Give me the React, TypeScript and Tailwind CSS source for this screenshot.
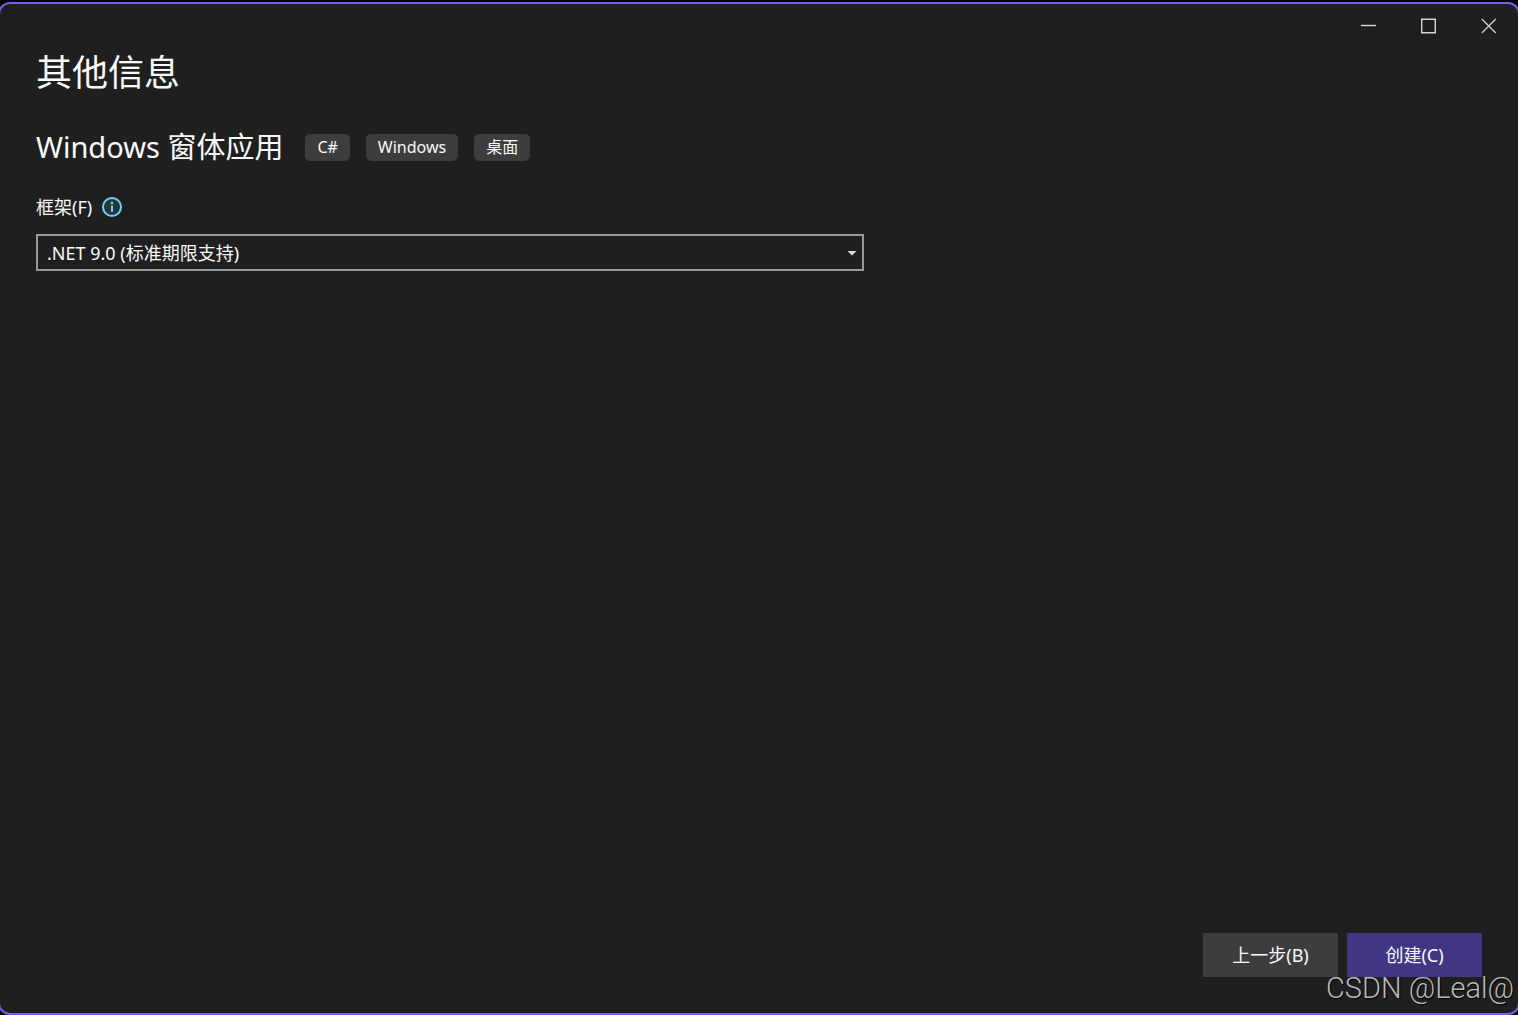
import { useState } from 'react';

const tags = ['C#', 'Windows', '桌面'];

const frameworks = [
  { value: 'net9.0', label: '.NET 9.0 (标准期限支持)' },
  { value: 'net8.0', label: '.NET 8.0 (长期支持)' },
];

function WindowControls() {
  return (
    <div className="flex justify-end text-[#d6d6d6]">
      <button type="button" aria-label="最小化" className="flex h-11 w-15 items-center justify-center">
        <svg className="h-4 w-4" viewBox="0 0 16 16" fill="none" stroke="currentColor" strokeWidth="1.4">
          <path d="M1 7.5h16" />
        </svg>
      </button>
      <button type="button" aria-label="最大化" className="flex h-11 w-15 items-center justify-center">
        <svg className="h-4 w-4" viewBox="0 0 16 16" fill="none" stroke="currentColor" strokeWidth="1.4">
          <path d="M1.7 1.2h13.6v13.6H1.7z" />
        </svg>
      </button>
      <button type="button" aria-label="关闭" className="flex h-11 w-15 items-center justify-center">
        <svg className="h-4 w-4" viewBox="0 0 16 16" fill="none" stroke="currentColor" strokeWidth="1.2">
          <path d="M1.8 1l14 14M15.8 1l-14 14" />
        </svg>
      </button>
    </div>
  );
}

function InfoIcon() {
  return (
    <svg className="h-5 w-5" viewBox="0 0 20 20" fill="none" aria-hidden="true">
      <circle cx="10" cy="10" r="9" fill="#26363c" stroke="#6dd3f5" strokeWidth="2" />
      <circle cx="10" cy="6" r="1.3" fill="#6dd3f5" />
      <path d="M10 8.5v6.5" stroke="#6dd3f5" strokeWidth="2" />
    </svg>
  );
}

export default function App() {
  const [framework, setFramework] = useState('net9.0');

  return (
    <div className="flex min-h-screen flex-col overflow-x-hidden bg-black pt-0.5 font-['Noto_Sans','Noto_Sans_CJK_SC',sans-serif] text-[#fafafa]">
      {/* side borders run off screen, only the corners show */}
      <div className="relative -mx-0.5 flex flex-1 flex-col rounded-xl border-2 border-[#7160e8] bg-[#1f1f1f]">
        <WindowControls />

        <main className="flex-1 px-9">
          <h1 className="text-4xl leading-[50px]">其他信息</h1>

          <div className="mt-7 flex items-center gap-[22px]">
            <h2 className="text-[29px] leading-[42px]">Windows 窗体应用</h2>
            <ul className="flex gap-4">
              {tags.map((tag) => (
                <li key={tag} className="rounded-[5px] bg-[#3d3d3d] px-3 text-base leading-[27px]">
                  {tag}
                </li>
              ))}
            </ul>
          </div>

          <div className="mt-[25px] flex items-center gap-[10px]">
            <label htmlFor="framework" className="text-lg leading-7">
              框架(F)
            </label>
            <InfoIcon />
          </div>

          <div className="relative mt-[13px] max-w-[828px]">
            <select
              id="framework"
              value={framework}
              onChange={(e) => setFramework(e.target.value)}
              className="block h-[37px] w-full appearance-none border-2 border-[#999999] bg-[#1f1f1f] px-[9px] text-lg leading-7"
            >
              {frameworks.map((f) => (
                <option key={f.value} value={f.value}>
                  {f.label}
                </option>
              ))}
            </select>
            <svg
              className="pointer-events-none absolute top-4 right-[7px] h-[6px] w-[10px]"
              viewBox="0 0 10 6"
              fill="#dcdcdc"
            >
              <path d="M.5 1h9L5 5.5z" />
            </svg>
          </div>
        </main>

        <footer className="flex justify-end gap-[9px] px-9 pb-9 text-lg">
          <button type="button" className="h-11 w-[135px] bg-[#3d3d3d]">
            上一步(B)
          </button>
          <button type="button" className="h-11 w-[135px] bg-[#413683]">
            创建(C)
          </button>
        </footer>

        {/* watermark */}
        <span className="pointer-events-none absolute right-1 bottom-[5px] font-[Roboto,sans-serif] text-[29px] leading-10 font-light text-[#b9b9b9] [text-shadow:1px_1px_1px_#000000]">
          CSDN @Leal@
        </span>
      </div>
    </div>
  );
}
